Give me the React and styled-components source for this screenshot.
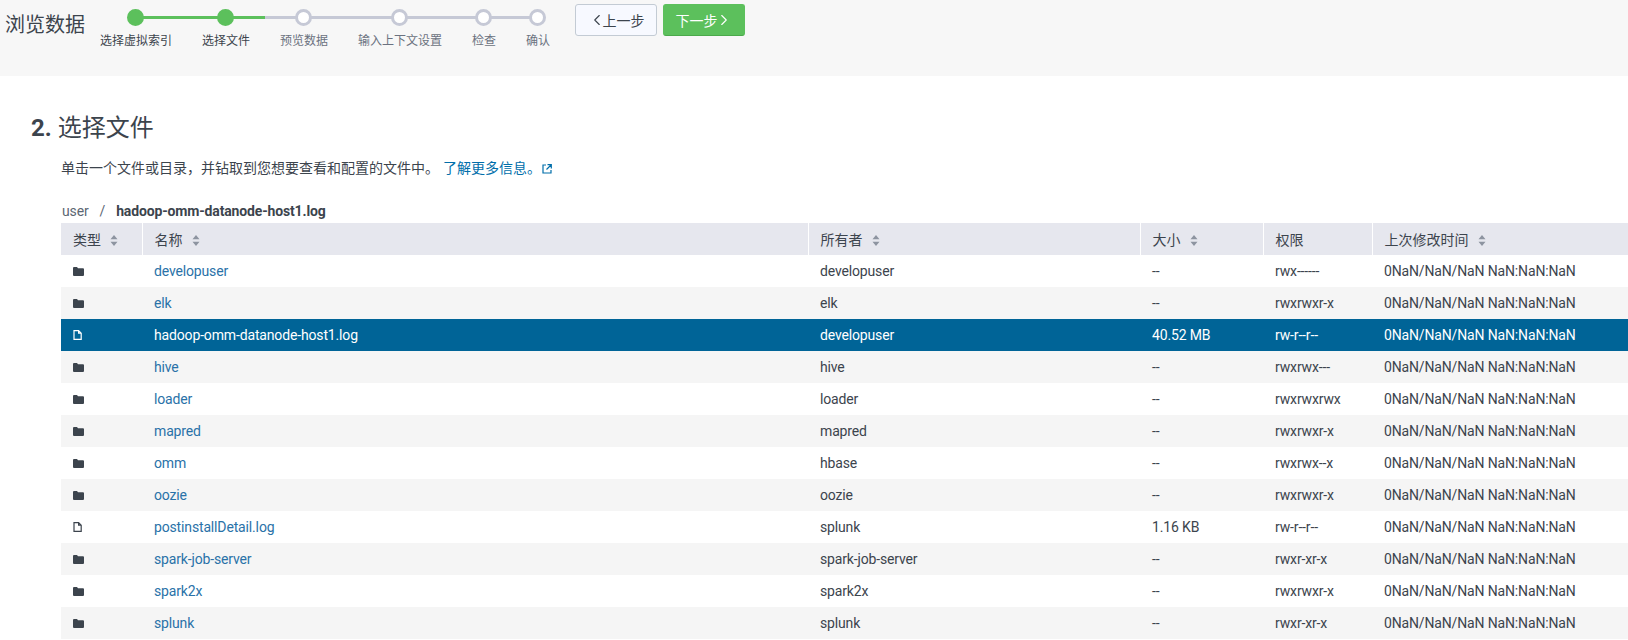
import React from 'react';
import styled, { createGlobalStyle } from 'styled-components';
import { ChevronLeft, ChevronRight } from 'lucide-react';

const GlobalStyle = createGlobalStyle`
  html, body {
    margin: 0;
    padding: 0;
    height: 640px;
    overflow: hidden;
    background: #fff;
    color: #3c444d;
    font-family: Roboto, "Noto Sans CJK SC", sans-serif;
    font-size: 14px;
  }
`;

const TopBar = styled.div`
  display: flex;
  align-items: flex-start;
  height: 76px;
  padding-left: 5px;
  background: #f7f7f7;
`;

const PageTitle = styled.div`
  width: 80px;
  margin-top: 11px;
  font-size: 20px;
  line-height: 29px;
  white-space: nowrap;
`;

const Steps = styled.div`
  display: flex;
  margin-top: 9px;
`;

const Step = styled.div`
  position: relative;
  display: flex;
  flex-direction: column;
  align-items: center;
  padding: 0 15px;
  font-size: 12px;
  line-height: 17px;
  color: ${(p) => (p.$active ? '#3c444d' : '#6b7280')};

  &::before, &::after {
    content: '';
    position: absolute;
    top: 7px;
    height: 3px;
  }
  &::before {
    left: 0;
    right: 50%;
    background: ${(p) => (p.$first ? 'transparent' : p.$active ? '#5cc05c' : '#c6c9d6')};
  }
  &::after {
    left: 50%;
    right: 0;
    background: ${(p) => (p.$last ? 'transparent' : p.$active ? '#5cc05c' : '#c6c9d6')};
  }
`;

const Dot = styled.span`
  position: relative;
  z-index: 1;
  box-sizing: border-box;
  width: 17px;
  height: 17px;
  margin: 0 2px 7px 0;
  border-radius: 50%;
  border: 3px solid ${(p) => (p.$active ? '#5cc05c' : '#c6c9d6')};
  background: ${(p) => (p.$active ? '#5cc05c' : '#fff')};
`;

const Buttons = styled.div`
  display: flex;
  gap: 6px;
  margin: 4px 0 0 10px;
`;

const Button = styled.button`
  display: flex;
  align-items: center;
  justify-content: center;
  box-sizing: border-box;
  width: 82px;
  height: 32px;
  padding: 0;
  border-radius: 3px;
  border: 1px solid ${(p) => (p.$primary ? '#5cc05c' : '#c3cbd4')};
  border-bottom-color: ${(p) => (p.$primary ? '#4ba94b' : '#c3cbd4')};
  background: ${(p) => (p.$primary ? '#5cc05c' : '#f7f9ff')};
  color: ${(p) => (p.$primary ? '#fff' : '#3c444d')};
  font-family: inherit;
  font-size: 14px;
  svg { margin: ${(p) => (p.$primary ? '0 0 0 -3px' : '0 -3px 0 0')}; }
`;

const Main = styled.div`
  padding-left: 61px;
`;

const Heading = styled.h2`
  margin: 35px 0 0 -30px;
  font-size: 24px;
  font-weight: 400;
  line-height: 34px;
  color: #3c444d;
`;

const HeadingNumber = styled.span`
  font-weight: 700;
`;

const Intro = styled.p`
  margin: 13px 0 0;
  font-size: 14px;
  line-height: 20px;
`;

const LearnLink = styled.a`
  margin-left: 4px;
  color: #006eaa;
  svg {
    margin-left: 1px;
    vertical-align: -1px;
  }
`;

const Crumbs = styled.div`
  margin-top: 23px;
  padding-left: 1px;
  font-size: 14px;
  line-height: 20px;
  letter-spacing: -0.15px;
  white-space: nowrap;
  color: #5c6773;
`;

const CrumbSep = styled.span`
  margin: 0 11px;
`;

const CrumbCurrent = styled.span`
  font-weight: 700;
  color: #3c444d;
`;

const Table = styled.table`
  width: 1567px;
  margin-top: 2px;
  table-layout: fixed;
  border-collapse: collapse;
  font-size: 14px;
`;

const HeadCell = styled.th`
  box-sizing: border-box;
  height: 32px;
  padding: 0 12px;
  background: #e6e7ee;
  border-left: 1px solid #fff;
  font-weight: 400;
  text-align: left;
  white-space: nowrap;
  &:first-child { border-left: 0; }
`;

const Row = styled.tr`
  background: ${(p) => (p.$selected ? '#006497' : p.$odd ? '#f5f5f5' : '#fff')};
  color: ${(p) => (p.$selected ? '#fff' : '#3c444d')};
`;

const Cell = styled.td`
  box-sizing: border-box;
  height: 32px;
  padding: 0 12px;
  letter-spacing: -0.15px;
  white-space: nowrap;
  svg { display: block; }
`;

const NameLink = styled.a`
  color: ${(p) => (p.$selected ? '#fff' : '#2a72a8')};
`;

const SortIcon = () => (
  <svg width="8" height="11" viewBox="0 0 8 11" style={{ marginLeft: 9, verticalAlign: -1 }}>
    <path d="M4 0 L7.5 4.3 H0.5 Z M4 11 L0.5 6.7 H7.5 Z" fill="#8d94a0" />
  </svg>
);

const FolderIcon = () => (
  <svg width="11" height="9" viewBox="0 0 11 9">
    <path d="M0 1 a1 1 0 0 1 1-1 H4 L5 1.3 H10 a1 1 0 0 1 1 1 V8 a1 1 0 0 1-1 1 H1 a1 1 0 0 1-1-1 Z" fill="#3c444d" />
  </svg>
);

const FileIcon = ({ color }) => (
  <svg width="9" height="10" viewBox="0 0 9 10" fill="none" stroke={color} strokeWidth="1.2">
    <path d="M1 .6 H5.6 L8.2 3.2 V9.4 H1 Z M5.6 .6 V3.2 H8.2" />
  </svg>
);

const ExternalIcon = () => (
  <svg width="10" height="10" viewBox="0 0 10 10" fill="none" stroke="#006eaa" strokeWidth="1.2">
    <path d="M4 1 H1 V9 H9 V6 M5.5 .7 H9.3 V4.5 M9 1 L4.5 5.5" />
  </svg>
);

const steps = ['选择虚拟索引', '选择文件', '预览数据', '输入上下文设置', '检查', '确认'];

const columns = [
  { title: '类型', width: 81, sort: true },
  { title: '名称', width: 666, sort: true },
  { title: '所有者', width: 332, sort: true },
  { title: '大小', width: 123, sort: true },
  { title: '权限', width: 109 },
  { title: '上次修改时间', width: 256, sort: true },
];

const files = [
  { name: 'developuser', owner: 'developuser', size: '--', perm: 'rwx------' },
  { name: 'elk', owner: 'elk', size: '--', perm: 'rwxrwxr-x' },
  { name: 'hadoop-omm-datanode-host1.log', owner: 'developuser', size: '40.52 MB', perm: 'rw-r--r--', file: true, selected: true },
  { name: 'hive', owner: 'hive', size: '--', perm: 'rwxrwx---' },
  { name: 'loader', owner: 'loader', size: '--', perm: 'rwxrwxrwx' },
  { name: 'mapred', owner: 'mapred', size: '--', perm: 'rwxrwxr-x' },
  { name: 'omm', owner: 'hbase', size: '--', perm: 'rwxrwx--x' },
  { name: 'oozie', owner: 'oozie', size: '--', perm: 'rwxrwxr-x' },
  { name: 'postinstallDetail.log', owner: 'splunk', size: '1.16 KB', perm: 'rw-r--r--', file: true },
  { name: 'spark-job-server', owner: 'spark-job-server', size: '--', perm: 'rwxr-xr-x' },
  { name: 'spark2x', owner: 'spark2x', size: '--', perm: 'rwxrwxr-x' },
  { name: 'splunk', owner: 'splunk', size: '--', perm: 'rwxr-xr-x' },
];

export default function App() {
  return (
    <>
      <GlobalStyle />
      <TopBar>
        <PageTitle>浏览数据</PageTitle>
        <Steps>
          {steps.map((label, i) => (
            <Step key={label} $active={i < 2} $first={i === 0} $last={i === steps.length - 1}>
              <Dot $active={i < 2} />
              {label}
            </Step>
          ))}
        </Steps>
        <Buttons>
          <Button>
            <ChevronLeft size={18} strokeWidth={1.5} />
            上一步
          </Button>
          <Button $primary>
            下一步
            <ChevronRight size={18} strokeWidth={1.5} />
          </Button>
        </Buttons>
      </TopBar>
      <Main>
        <Heading><HeadingNumber>2.</HeadingNumber> 选择文件</Heading>
        <Intro>
          单击一个文件或目录，并钻取到您想要查看和配置的文件中。
          <LearnLink>
            了解更多信息。
            <ExternalIcon />
          </LearnLink>
        </Intro>
        <Crumbs>
          user<CrumbSep>/</CrumbSep><CrumbCurrent>hadoop-omm-datanode-host1.log</CrumbCurrent>
        </Crumbs>
        <Table>
          <colgroup>
            {columns.map((c) => <col key={c.title} width={c.width} />)}
          </colgroup>
          <thead>
            <tr>
              {columns.map((c) => (
                <HeadCell key={c.title}>
                  {c.title}
                  {c.sort && <SortIcon />}
                </HeadCell>
              ))}
            </tr>
          </thead>
          <tbody>
            {files.map((f, i) => (
              <Row key={f.name} $odd={i % 2 === 1} $selected={f.selected}>
                <Cell>
                  {f.file ? <FileIcon color={f.selected ? '#fff' : '#3c444d'} /> : <FolderIcon />}
                </Cell>
                <Cell><NameLink $selected={f.selected}>{f.name}</NameLink></Cell>
                <Cell>{f.owner}</Cell>
                <Cell>{f.size}</Cell>
                <Cell>{f.perm}</Cell>
                <Cell>0NaN/NaN/NaN NaN:NaN:NaN</Cell>
              </Row>
            ))}
          </tbody>
        </Table>
      </Main>
    </>
  );
}
